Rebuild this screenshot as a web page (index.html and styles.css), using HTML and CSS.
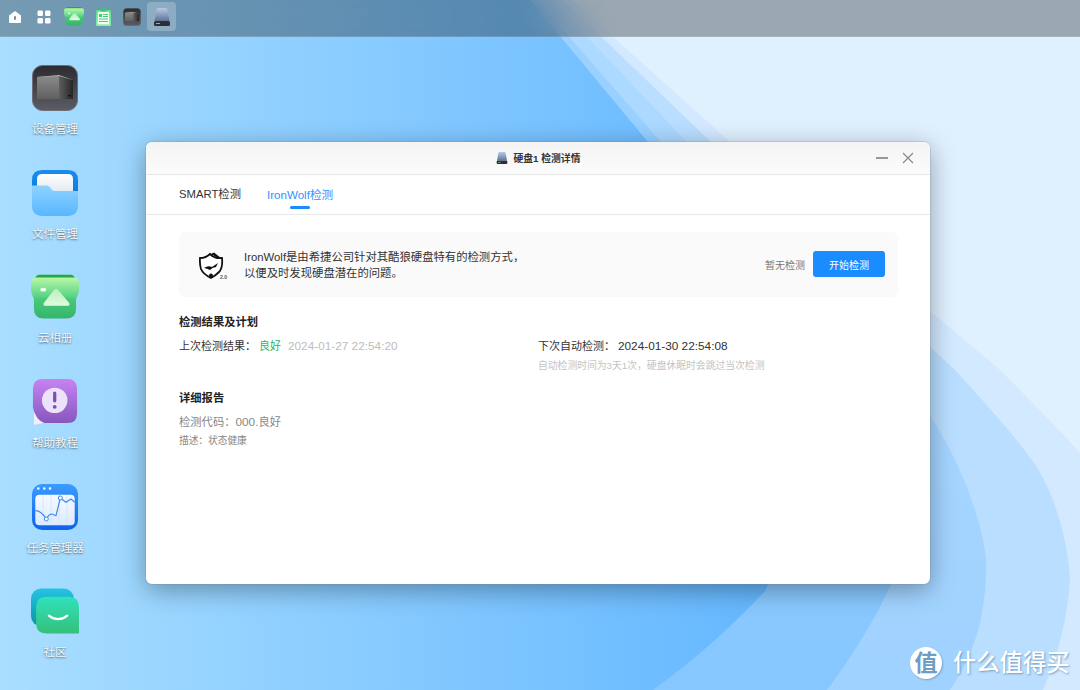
FILE: index.html
```html
<!DOCTYPE html>
<html lang="zh-CN">
<head>
<meta charset="utf-8">
<title>硬盘1 检测详情</title>
<link rel="stylesheet" href="styles.css">
</head>
<body>
<svg class="defs" aria-hidden="true">
  <defs>
    <linearGradient id="gBase" x1="0" x2="1" y1="0" y2="0"><stop offset="0" stop-color="#a9deff"/><stop offset="1" stop-color="#62b6ff"/></linearGradient>
    <linearGradient id="gBandA" x1="0" x2="0" y1="0" y2="1"><stop offset="0" stop-color="#9cd2ff"/><stop offset="1" stop-color="#86c7ff"/></linearGradient>
    <linearGradient id="gBandB" x1="0" x2="0" y1="0" y2="1"><stop offset="0" stop-color="#aedaff"/><stop offset="1" stop-color="#a0d2ff"/></linearGradient>
    <linearGradient id="gDev" x1="0" x2="0" y1="0" y2="1"><stop offset="0" stop-color="#2b2b30"/><stop offset="1" stop-color="#5c5c66"/></linearGradient>
    <linearGradient id="gDevSide" x1="0" x2="1" y1="0" y2="0"><stop offset="0" stop-color="#5e5e5e"/><stop offset="1" stop-color="#262626"/></linearGradient>
    <linearGradient id="gDevFront" x1="0" x2="0" y1="0" y2="1"><stop offset="0" stop-color="#8a8a8a"/><stop offset="1" stop-color="#606060"/></linearGradient>
    <linearGradient id="gFolderBack" x1="0" x2="0" y1="0" y2="1"><stop offset="0" stop-color="#1b8df0"/><stop offset="1" stop-color="#0f78dc"/></linearGradient>
    <linearGradient id="gPage" x1="0" x2="0" y1="0" y2="1"><stop offset="0" stop-color="#ffffff"/><stop offset="1" stop-color="#dfe6ee"/></linearGradient>
    <linearGradient id="gFolder" x1="0" x2="0" y1="0" y2="1"><stop offset="0" stop-color="#8ed3ff"/><stop offset="1" stop-color="#58b6ff"/></linearGradient>
    <linearGradient id="gFlap" x1="0" x2="0" y1="0" y2="1"><stop offset="0" stop-color="#baf7a8"/><stop offset="1" stop-color="#52d083"/></linearGradient>
    <linearGradient id="gAlbum" x1="0" x2="0" y1="0" y2="1"><stop offset="0" stop-color="#4ccf7c"/><stop offset="1" stop-color="#36b56b"/></linearGradient>
    <linearGradient id="gPeak" x1="0" x2="0" y1="0" y2="1"><stop offset="0" stop-color="#b8f0bc"/><stop offset="1" stop-color="#e2fae0"/></linearGradient>
    <linearGradient id="gHelp" x1="0" x2="0" y1="0" y2="1"><stop offset="0" stop-color="#c683f2"/><stop offset="1" stop-color="#8657bd"/></linearGradient>
    <linearGradient id="gTask" x1="0" x2="0" y1="0" y2="1"><stop offset="0" stop-color="#3a9bff"/><stop offset="1" stop-color="#0f62ec"/></linearGradient>
    <linearGradient id="gPane" x1="0" x2="0" y1="0" y2="1"><stop offset="0" stop-color="#f6faff"/><stop offset="1" stop-color="#dbeaff"/></linearGradient>
    <linearGradient id="gBack" x1="0" x2="0" y1="0" y2="1"><stop offset="0" stop-color="#24c4e0"/><stop offset="1" stop-color="#0a93a8"/></linearGradient>
    <linearGradient id="gFront" x1="0" x2="0" y1="0" y2="1"><stop offset="0" stop-color="#30e2bc"/><stop offset="1" stop-color="#35c07a"/></linearGradient>
    <linearGradient id="gDisk" x1="0" x2="0" y1="0" y2="1"><stop offset="0" stop-color="#b5c9e8"/><stop offset="1" stop-color="#5f7396"/></linearGradient>
    <linearGradient id="gNote" x1="0" x2="0" y1="0" y2="1"><stop offset="0" stop-color="#55dc8a"/><stop offset="1" stop-color="#8af0a8"/></linearGradient>

    <symbol id="i-device" viewBox="0 0 46 46">
      <rect x="0.5" y="0.5" width="45" height="45" rx="10" fill="url(#gDev)" stroke="#6d6d78"/>
      <path d="M5 12 L27 10 L41 15 L27 14 Z" fill="#b5b5b5"/>
      <path d="M5 12 L27 11 L27 34 L5 34 Z" fill="url(#gDevFront)"/>
      <path d="M27 11 L41 15 L41 34 L27 34 Z" fill="url(#gDevSide)"/>
      <rect x="36" y="30" width="3" height="1.4" fill="#111"/>
    </symbol>
    <symbol id="i-album" viewBox="0 0 49 46">
      <path d="M4 6 Q4 0 10 0 H39 Q45 0 45 6 V10 H4 Z" fill="#22a83e"/>
      <path d="M3 20 H46 V35 Q46 45 36 45 H13 Q3 45 3 35 Z" fill="url(#gAlbum)"/>
      <path d="M0 8 Q0 3 6 3 H43 Q49 3 49 8 V15 Q49 19 46.500 24 H2.500 Q0 19 0 15 Z" fill="url(#gFlap)"/>
      <ellipse cx="12.500" cy="15.500" rx="3" ry="2" fill="#e6ffe8"/>
      <path d="M24 15 Q26 14 28 16 L39 29 Q40 32 37 32 H15 Q12 32 13 29 Z" fill="url(#gPeak)"/>
    </symbol>
    <symbol id="i-disk" viewBox="0 0 18 18">
      <path d="M3.500 1.500 Q3.700 0 5.500 0 H12.500 Q14.300 0 14.500 1.500 L16.500 13 H1.500 Z" fill="url(#gDisk)"/>
      <rect x="1" y="13" width="16" height="5" rx="1.500" fill="#2c2f36"/>
      <rect x="3" y="15" width="4" height="1" fill="#6c8"/>
    </symbol>
  </defs>
</svg>

<svg class="wallpaper" viewBox="0 0 1080 690" aria-hidden="true">
  <rect width="1080" height="690" fill="#dff0ff"/>
  <path d="M572 0 L730 142 L1000 370 Q1050 420 1080 453 V690 H0 V0 Z" fill="#d2e9ff"/>
  <path d="M563 0 L711 142 L955 370 Q1015 435 1037 467 Q1065 515 1070 577 Q1068 630 1043 690 H0 V0 Z" fill="#b9deff"/>
  <path d="M552 0 L687 142 L931 417 Q965 470 980 527 Q988 560 986 573 Q985 640 950 690 H0 V0 Z" fill="url(#gBandB)"/>
  <path d="M537 0 L661 142 Q800 340 885 500 Q905 540 892 583 Q865 640 827 690 H0 V0 Z" fill="url(#gBandA)"/>
  <path d="M530 0 L648 142 Q760 300 790 430 Q800 520 765 591 Q715 645 653 690 H0 V0 Z" fill="url(#gBase)"/>
</svg>

<header class="taskbar">
  <span class="task">
    <svg class="t-icon" viewBox="0 0 14 14"><path d="M1 5.500 L7 1 L13 5.500 V12 Q13 13 12 13 H2 Q1 13 1 12 Z" fill="#fff"/><rect x="6" y="6" width="2" height="4" rx="1" fill="#7a8fa0"/></svg>
  </span>
  <span class="task">
    <svg class="t-icon" viewBox="0 0 14 14"><rect x="0.500" y="0.500" width="5.500" height="5.500" rx="1.300" fill="#fff"/><rect x="8" y="0.500" width="5.500" height="5.500" rx="1.300" fill="#fff"/><rect x="0.500" y="8" width="5.500" height="5.500" rx="1.300" fill="#fff"/><rect x="8" y="8" width="5.500" height="5.500" rx="1.300" fill="#fff"/></svg>
  </span>
  <span class="task"><svg class="t-app" viewBox="0 0 49 46"><use href="#i-album"/></svg></span>
  <span class="task">
    <svg class="t-note" viewBox="0 0 17 18"><path d="M1 3 Q1 2 2 2 H15 Q16 2 16 3 V17 Q16 18 15 18 H2 Q1 18 1 17 Z" fill="url(#gNote)"/><rect x="2.800" y="3.800" width="11.400" height="12.500" fill="#f3fff3"/><rect x="6" y="0.500" width="5" height="3" rx="1" fill="#39c46e"/><rect x="4" y="6" width="3" height="3" fill="#49c97a"/><path d="M8 6.500 H13 M8 8.500 H13 M4 11 H13 M4 13.500 H13" stroke="#49c97a" stroke-width="1.200"/></svg>
  </span>
  <span class="task"><svg class="t-app t-device" viewBox="0 0 46 46"><use href="#i-device"/></svg></span>
  <span class="task task-active"><svg class="t-disk" viewBox="0 0 18 18"><use href="#i-disk"/></svg></span>
</header>

<nav class="desktop">
  <div class="app">
    <svg class="app-icon" viewBox="0 0 46 46"><use href="#i-device"/></svg>
    <span class="app-name">设备管理</span>
  </div>
  <div class="app">
    <svg class="app-icon" viewBox="0 0 46 46"><path d="M0 10 Q0 0 10 0 H36 Q46 0 46 10 V24 H0 Z" fill="url(#gFolderBack)"/><path d="M5 9 Q5 4 10 4 H36 Q41 4 41 9 V24 H5 Z" fill="url(#gPage)"/><path d="M0 15.500 H15 Q17 15.500 18.500 18 Q20 21 23 21 H46 V35 Q46 46 35 46 H11 Q0 46 0 35 Z" fill="url(#gFolder)"/></svg>
    <span class="app-name">文件管理</span>
  </div>
  <div class="app">
    <svg class="app-icon app-wide" viewBox="0 0 49 46"><use href="#i-album"/></svg>
    <span class="app-name">云相册</span>
  </div>
  <div class="app">
    <svg class="app-icon" viewBox="0 0 46 48"><path d="M1 28 V48 L14 45 Z" fill="#eef0f8"/><path d="M10 0 H36 Q46 0 46 10 V36 Q46 46 36 46 H12 Q3 43 0 30 V10 Q0 0 10 0 Z" fill="url(#gHelp)"/><circle cx="22.700" cy="22.300" r="13.300" fill="#ece2fb"/><rect x="21" y="13" width="3.400" height="11.500" rx="1.700" fill="#7c50b3"/><circle cx="22.700" cy="29" r="2" fill="#7c50b3"/></svg>
    <span class="app-name">帮助教程</span>
  </div>
  <div class="app">
    <svg class="app-icon" viewBox="0 0 46 46"><rect width="46" height="46" rx="10" fill="url(#gTask)"/><circle cx="6.300" cy="4.500" r="1.300" fill="#fff"/><circle cx="12.300" cy="4.500" r="1.300" fill="#fff"/><circle cx="18" cy="4.500" r="1.300" fill="#fff"/><rect x="3.300" y="10.700" width="39.400" height="30.500" rx="4" fill="url(#gPane)"/><path d="M11 11 V41 M19 11 V41 M27 11 V41 M35 11 V41" stroke="#d3e4fb" stroke-width="0.800"/><path d="M3.300 26.700 Q9 26.500 14.300 35 Q17 30 20 30 L24 31.700 L28.300 14 L34 18.300 L39 15 L42.700 18.300" fill="none" stroke="#3d8af0" stroke-width="1.200"/><circle cx="14.300" cy="35" r="2" fill="#fff" stroke="#3d8af0"/><circle cx="28.300" cy="14" r="2" fill="#fff" stroke="#3d8af0"/></svg>
    <span class="app-name">任务管理器</span>
  </div>
  <div class="app">
    <svg class="app-icon app-wide" viewBox="0 0 47 44"><rect width="42" height="37" rx="10" fill="url(#gBack)"/><path d="M15 8 H37 Q47 8 47 18 V44 H15 Q5 44 5 34 V18 Q5 8 15 8 Z" fill="url(#gFront)"/><path d="M17.500 26.500 Q26.500 33.500 35.500 26.500" fill="none" stroke="#fff" stroke-width="2.200" stroke-linecap="round"/></svg>
    <span class="app-name">社区</span>
  </div>
</nav>

<section class="window">
  <header class="win-title">
    <div class="win-caption">
      <svg class="win-disk" viewBox="0 0 18 18"><use href="#i-disk"/></svg>
      <span>硬盘1 检测详情</span>
    </div>
    <div class="win-controls">
      <svg class="ctl" viewBox="0 0 12 12"><path d="M0 6 H12" stroke="#777" stroke-width="1.300"/></svg>
      <svg class="ctl" viewBox="0 0 12 12"><path d="M1 1 L11 11 M11 1 L1 11" stroke="#888" stroke-width="1.200"/></svg>
    </div>
  </header>
  <div class="tabs">
    <span class="tab">SMART检测</span>
    <span class="tab tab-active">IronWolf检测</span>
  </div>
  <div class="content">
    <div class="panel">
      <svg class="shield" viewBox="0 0 30 28">
        <path d="M2 6 Q8 6 12 2 Q17 7 24 6 Q25 16 21 20 Q17 24 13 26 Q5 22 3 17 Q1.500 12 2 6 Z" fill="#fff" stroke="#111" stroke-width="1.800"/>
        <path d="M6 16 Q10 13 14 15 L20 11 L18 15 Q14 15.500 12 18 Q9 16.500 6 16 Z" fill="#111"/>
        <path d="M11 3 L16 0.500 L23 6 L20 6.500 L15 3 Z" fill="#111"/>
        <circle cx="13" cy="23.500" r="2" fill="#111"/>
        <text class="shield-ver" x="22" y="27">2.0</text>
      </svg>
      <p class="panel-text">IronWolf是由希捷公司针对其酷狼硬盘特有的检测方式，<br>以便及时发现硬盘潜在的问题。</p>
      <span class="panel-status">暂无检测</span>
      <button class="btn">开始检测</button>
    </div>

    <h2 class="sec-title sec-first">检测结果及计划</h2>
    <div class="results">
      <div class="line">上次检测结果：<span class="good">良好</span><span class="num muted">2024-01-27 22:54:20</span></div>
      <div>
        <div class="line">下次自动检测：<span class="num next">2024-01-30 22:54:08</span></div>
        <div class="hint">自动检测时间为3天1次，硬盘休眠时会跳过当次检测</div>
      </div>
    </div>

    <h2 class="sec-title sec-report">详细报告</h2>
    <div class="line line-grey">检测代码：<span class="num">000.</span>良好</div>
    <div class="desc">描述：状态健康</div>
  </div>
</section>

<div class="watermark">
  <span class="wm-badge">值</span>
  <span class="wm-text">什么值得买</span>
</div>
</body>
</html>
```

FILE: styles.css
```css
* { box-sizing: border-box; }

html, body {
  margin: 0;
  width: 1080px;
  height: 690px;
  overflow: hidden;
}

body {
  position: relative;
  font-family: "Liberation Sans", "Noto Sans CJK SC", sans-serif;
  color: #333;
}

.defs { position: absolute; width: 0; height: 0; }

.wallpaper {
  position: absolute;
  inset: 0;
  width: 1080px;
  height: 690px;
  display: block;
}

.taskbar {
  position: relative;
  height: 37px;
  padding: 2px 0 0 0.5px;
  display: flex;
  align-items: flex-start;
  background: rgba(0, 0, 0, 0.3);
  backdrop-filter: blur(14px);
  border-bottom: 1px solid rgba(255, 255, 255, 0.12);
}

.task {
  width: 29.3px;
  height: 29px;
  display: flex;
  align-items: center;
  justify-content: center;
  border-radius: 4px;
}

.task-active { background: rgba(255, 255, 255, 0.22); }

.t-icon { width: 14px; height: 14px; }
.t-app { width: 20px; height: 19px; }
.t-device { width: 18px; height: 18px; }
.t-note { width: 17px; height: 18px; }
.t-disk { width: 18px; height: 18px; }

.desktop {
  position: relative;
  width: 110px;
  padding-top: 28px;
  display: flex;
  flex-direction: column;
}

.app {
  height: 104.7px;
  display: flex;
  flex-direction: column;
  align-items: center;
}

.app-icon {
  width: 46px;
  height: 46px;
  flex: none;
  overflow: visible;
}

.app-wide { width: 48px; }

.app-name {
  margin-top: 10px;
  font-size: 11.500px;
  line-height: 16px;
  color: #f2f5f7;
  text-shadow: 0 1px 2px rgba(0, 0, 0, 0.55);
}

.window {
  position: absolute;
  left: 146px;
  top: 142px;
  width: 784px;
  height: 442px;
  border-radius: 6px;
  background: #fff;
  box-shadow: 0 0 0 1px rgba(120, 140, 160, 0.25), 0 6px 26px rgba(0, 0, 0, 0.35);
  overflow: hidden;
}

.win-title {
  position: relative;
  height: 33px;
  display: flex;
  align-items: center;
  justify-content: center;
  background: linear-gradient(#f4f4f4, #fbfbfb);
  border-bottom: 1px solid #e6e6e6;
}

.win-caption {
  display: flex;
  align-items: center;
  gap: 6px;
  font-size: 9.800px;
  font-weight: 700;
  color: #333;
}

.win-disk { width: 12px; height: 12px; }

.win-controls {
  position: absolute;
  right: 16px;
  top: 10px;
  display: flex;
  gap: 14px;
}

.ctl { width: 12px; height: 12px; display: block; }

.tabs {
  height: 40px;
  padding: 0 33px;
  display: flex;
  gap: 26px;
  border-bottom: 1px solid #e8e8e8;
}

.tab {
  position: relative;
  font-size: 11.300px;
  line-height: 39px;
  color: #333;
}

.tab-active { font-size: 11.600px; color: #2f93ff; }

.tab-active::after {
  content: "";
  position: absolute;
  left: 23px;
  bottom: 5px;
  width: 20px;
  height: 3px;
  border-radius: 2px;
  background: #1a8cff;
}

.content { padding: 17px 32px 0 33px; }

.panel {
  height: 65px;
  padding: 0 13px 0 19px;
  display: flex;
  align-items: center;
  background: #fafafa;
  border-radius: 6px;
}

.shield { width: 30px; height: 28px; flex: none; margin-top: 2px; overflow: visible; }

.shield-ver {
  font-size: 5px;
  font-weight: 700;
  fill: #555;
}

.panel-text {
  margin: 0 0 0 16px;
  font-size: 11.350px;
  line-height: 16px;
  color: #333;
}

.panel-status {
  margin-left: auto;
  font-size: 10px;
  color: #777;
}

.btn {
  margin: 0 0 1px 8px;
  width: 72px;
  height: 26px;
  border: 0;
  border-radius: 3px;
  background: #1a8cff;
  color: #fff;
  font: 10px "Liberation Sans", "Noto Sans CJK SC", sans-serif;
}

.sec-title {
  margin: 0;
  font-size: 11.300px;
  line-height: 16px;
  font-weight: 700;
  color: #222;
}

.sec-first { margin-top: 17px; }
.sec-report { margin-top: 16px; }

.results {
  margin-top: 8px;
  display: grid;
  grid-template-columns: 359px 1fr;
}

.line {
  font-size: 11px;
  line-height: 16px;
  color: #333;
}

.num { font-size: 11.800px; }
.good { margin: 0 7px 0 3px; color: #2cb85c; }
.muted { color: #bdbdbd; }
.next { margin-left: 3px; color: #333; }

.hint {
  margin-top: 4px;
  font-size: 9.800px;
  line-height: 16px;
  color: #c4c4c4;
}

.line-grey { margin-top: 8px; font-size: 11.300px; color: #888; }

.desc {
  margin-top: 3px;
  font-size: 9.700px;
  line-height: 16px;
  color: #888;
}

.watermark {
  position: absolute;
  left: 910px;
  top: 647px;
  display: flex;
  align-items: center;
  gap: 11px;
}

.wm-badge {
  width: 32px;
  height: 32px;
  border-radius: 50%;
  background: #fff;
  color: #6d9cc4;
  font-size: 23px;
  line-height: 32px;
  text-align: center;
  font-weight: 700;
  box-shadow: 1px 1px 2px rgba(70, 110, 150, 0.45);
}

.wm-text {
  font-size: 23.300px;
  line-height: 32px;
  color: #fff;
  font-weight: 500;
  text-shadow: 1px 1px 2px rgba(70, 110, 150, 0.6);
}
```
